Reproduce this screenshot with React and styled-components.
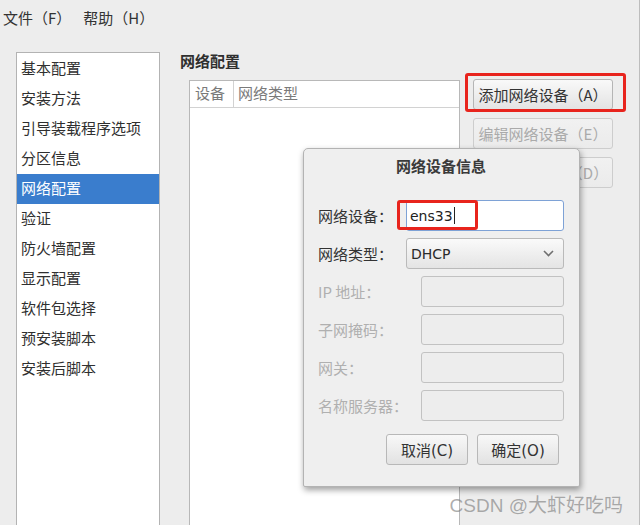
import React from "react";
import styled, { createGlobalStyle } from "styled-components";

const GlobalStyle = createGlobalStyle`
  html, body {
    margin: 0;
    padding: 0;
    background: #ededed;
  }
  body {
    font-family: "Noto Sans CJK SC", sans-serif;
  }
`;

const sideItems = [
  "基本配置",
  "安装方法",
  "引导装载程序选项",
  "分区信息",
  "网络配置",
  "验证",
  "防火墙配置",
  "显示配置",
  "软件包选择",
  "预安装脚本",
  "安装后脚本",
];

const disabledFields = ["IP 地址：", "子网掩码：", "网关：", "名称服务器："];

const App = () => {
  return (
    <>
      <GlobalStyle />
      <Window>
        <MenuBar>
          <MenuItem>文件（F）</MenuItem>
          <MenuItem>帮助（H）</MenuItem>
        </MenuBar>
        <Body>
          <SideList>
            {sideItems.map((item) => (
              <SideItem key={item} $active={item === "网络配置"}>
                {item}
              </SideItem>
            ))}
          </SideList>
          <Content>
            <Heading>网络配置</Heading>
            <ContentRow>
              <DeviceTable>
                <TableHead>
                  <HeadCell $first>设备</HeadCell>
                  <HeadCell>网络类型</HeadCell>
                </TableHead>
              </DeviceTable>
              <ButtonColumn>
                <Highlighted>
                  <SideButton>添加网络设备（A）</SideButton>
                  <RedMark $top={-6} $left={-8} $right={-13} $bottom={-2} />
                </Highlighted>
                <SideButton disabled>编辑网络设备（E）</SideButton>
                <SideButton disabled>删除网络设备（D）</SideButton>
              </ButtonColumn>
            </ContentRow>
          </Content>
        </Body>

        <Dialog>
          <DialogTitle>网络设备信息</DialogTitle>
          <Form>
            <FormRow>
              <Label>网络设备：</Label>
              <Highlighted>
                <TextInput $width={158}>
                  ens33
                  <Caret />
                </TextInput>
                <RedMark $top={0} $left={-9} $width={81} $bottom={1} />
              </Highlighted>
            </FormRow>
            <FormRow>
              <Label>网络类型：</Label>
              <Select $width={158}>
                DHCP
                <svg width="11" height="7" viewBox="0 0 11 7">
                  <polyline
                    points="1,1 5.5,5.5 10,1"
                    fill="none"
                    stroke="#6f6f6f"
                    strokeWidth="1.6"
                  />
                </svg>
              </Select>
            </FormRow>
            {disabledFields.map((label) => (
              <FormRow key={label}>
                <Label $disabled>{label}</Label>
                <DisabledInput $width={143} />
              </FormRow>
            ))}
          </Form>
          <DialogButtons>
            <DialogButton>取消(C)</DialogButton>
            <DialogButton>确定(O)</DialogButton>
          </DialogButtons>
        </Dialog>

        <Watermark>CSDN @大虾好吃吗</Watermark>
      </Window>
    </>
  );
};

export default App;

const Window = styled.div`
  position: relative;
  width: 639px;
  height: 525px;
  border-right: 1px solid #bdbdbd;
  overflow: hidden;
  display: flex;
  flex-direction: column;
  font-size: 15px;
  color: #2f2f2f;
`;

const MenuBar = styled.div`
  height: 35px;
  display: flex;
  align-items: center;
  padding: 0 0 0 3px;
  gap: 12px;
`;

const MenuItem = styled.div`
  line-height: 20px;
  color: #333;
`;

const Body = styled.div`
  flex: 1;
  min-height: 0;
  display: flex;
  padding: 17px 0 0 16px;
`;

const SideList = styled.div`
  width: 142px;
  border: 1px solid #b3b3b3;
  border-bottom: none;
  background: #fff;
  display: flex;
  flex-direction: column;
  padding-top: 1px;
`;

const SideItem = styled.div`
  height: 30px;
  line-height: 28px;
  padding-left: 4px;
  box-sizing: border-box;
  padding-bottom: 2px;
  white-space: nowrap;
  background: ${(p) => (p.$active ? "#3a7dcd" : "transparent")};
  color: ${(p) => (p.$active ? "#fff" : "#2f2f2f")};
`;

const Content = styled.div`
  flex: 1;
  margin-left: 20px;
  display: flex;
  flex-direction: column;
`;

const Heading = styled.div`
  font-weight: bold;
  line-height: 18px;
  margin-bottom: 10px;
  color: #2f2f2f;
`;

const ContentRow = styled.div`
  flex: 1;
  display: flex;
  gap: 13px;
  padding-left: 9px;
`;

const DeviceTable = styled.div`
  width: 269px;
  border: 1px solid #b8b8b8;
  border-bottom: none;
  background: #fff;
`;

const TableHead = styled.div`
  height: 26px;
  display: flex;
  border-bottom: 1px solid #d2d2d2;
`;

const HeadCell = styled.div`
  line-height: 24px;
  color: #7a7a7a;
  padding-left: ${(p) => (p.$first ? "5px" : "4px")};
  width: ${(p) => (p.$first ? "38px" : "auto")};
  border-right: ${(p) => (p.$first ? "1px solid #d2d2d2" : "none")};
`;

const ButtonColumn = styled.div`
  display: flex;
  flex-direction: column;
  gap: 8px;
  margin-top: -1px;
`;

const Highlighted = styled.div`
  position: relative;
`;

const RedMark = styled.div`
  position: absolute;
  top: ${(p) => p.$top}px;
  left: ${(p) => p.$left}px;
  bottom: ${(p) => p.$bottom}px;
  ${(p) => (p.$width ? `width: ${p.$width}px;` : `right: ${p.$right}px;`)}
  box-sizing: border-box;
  border: 3px solid #e8241d;
  border-radius: 3px;
  pointer-events: none;
`;

const SideButton = styled.button`
  width: 140px;
  height: 31px;
  padding: 0;
  border: 1px solid ${(p) => (p.disabled ? "#cdcdcd" : "#b5b5b5")};
  border-radius: 3px;
  background: ${(p) =>
    p.disabled
      ? "linear-gradient(#f1f1f1, #ebebeb)"
      : "linear-gradient(#f9f9f9, #e3e3e3)"};
  font-family: "Noto Sans CJK SC", sans-serif;
  font-size: 15px;
  color: ${(p) => (p.disabled ? "#aaaaaa" : "#333")};
  white-space: nowrap;
`;

const Dialog = styled.div`
  position: absolute;
  left: 303px;
  top: 148px;
  width: 277px;
  height: 339px;
  box-sizing: border-box;
  padding: 0 15px 0 14px;
  background: #efefef;
  border: 1px solid #b3b3b3;
  border-radius: 5px 5px 2px 2px;
  box-shadow: 1px 3px 6px rgba(0, 0, 0, 0.38);
  display: flex;
  flex-direction: column;
`;

const DialogTitle = styled.div`
  margin-top: 7px;
  line-height: 20px;
  text-align: center;
  font-weight: bold;
  color: #3a3a3a;
`;

const Form = styled.div`
  margin-top: 24px;
  display: flex;
  flex-direction: column;
  gap: 7px;
`;

const FormRow = styled.div`
  height: 31px;
  display: flex;
  align-items: center;
  justify-content: space-between;
`;

const Label = styled.div`
  color: ${(p) => (p.$disabled ? "#b0b0b0" : "#333")};
  white-space: nowrap;
`;

const TextInput = styled.div`
  width: ${(p) => p.$width}px;
  height: 31px;
  box-sizing: border-box;
  padding-left: 3px;
  display: flex;
  align-items: center;
  background: #fff;
  border: 1px solid #7ea2d6;
  border-radius: 3px;
  font-family: "DejaVu Sans", sans-serif;
  font-size: 14px;
  color: #222;
`;

const Caret = styled.span`
  display: inline-block;
  width: 1px;
  height: 17px;
  margin-left: 1px;
  background: #222;
`;

const Select = styled.div`
  width: ${(p) => p.$width}px;
  height: 31px;
  box-sizing: border-box;
  padding: 0 9px 0 4px;
  display: flex;
  align-items: center;
  justify-content: space-between;
  background: linear-gradient(#fafafa, #e4e4e4);
  border: 1px solid #bababa;
  border-radius: 3px;
  font-family: "DejaVu Sans", sans-serif;
  font-size: 14px;
  color: #2a2a2a;
`;

const DisabledInput = styled.div`
  width: ${(p) => p.$width}px;
  height: 31px;
  box-sizing: border-box;
  background: #ededed;
  border: 1px solid #c2c2c2;
  border-radius: 3px;
`;

const DialogButtons = styled.div`
  margin-top: 13px;
  padding-right: 5px;
  display: flex;
  justify-content: flex-end;
  gap: 9px;
`;

const DialogButton = styled.button`
  width: 82px;
  height: 31px;
  padding: 0;
  border: 1px solid #b8b8b8;
  border-radius: 3px;
  background: linear-gradient(#f8f8f8, #e2e2e2);
  font-family: "DejaVu Sans", "Noto Sans CJK SC", sans-serif;
  font-size: 15px;
  color: #333;
`;

const Watermark = styled.div`
  position: absolute;
  right: 16px;
  bottom: 7px;
  font-family: "Liberation Sans", "Noto Sans CJK SC", sans-serif;
  font-size: 19px;
  line-height: 24px;
  color: rgba(120, 120, 120, 0.6);
  white-space: nowrap;
`;
